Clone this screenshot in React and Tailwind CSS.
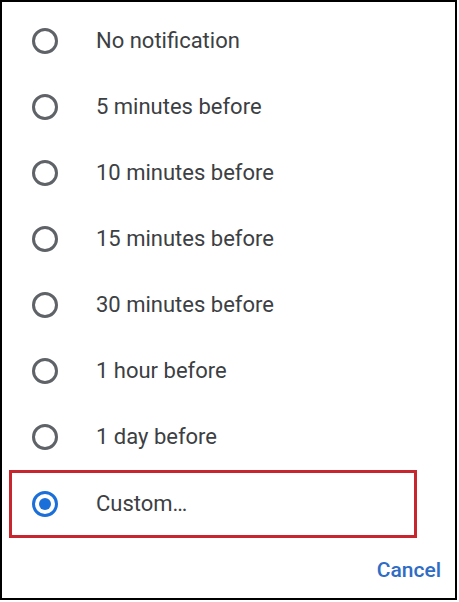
const options = [
  'No notification',
  '5 minutes before',
  '10 minutes before',
  '15 minutes before',
  '30 minutes before',
  '1 hour before',
  '1 day before',
  'Custom…',
];

function Radio({ checked }) {
  if (checked) {
    return (
      <div className="w-[26px] h-[26px] rounded-full border-[3px] border-[#1a6fd8] flex items-center justify-center shrink-0">
        <div className="w-[12px] h-[12px] rounded-full bg-[#1a6fd8]" />
      </div>
    );
  }
  return <div className="w-[26px] h-[26px] rounded-full border-[3px] border-[#5f6368] shrink-0" />;
}

export default function App() {
  const selected = options.length - 1;
  return (
    <div className="w-[459px] h-[602px] bg-white">
      <div
        className="w-[457px] h-[600px] border-2 border-black flex flex-col pt-[6px] pl-[7px]"
        style={{ fontFamily: 'Roboto, "Noto Sans", sans-serif' }}
      >
        {options.map((label, i) => (
          <div
            key={label}
            className={
              i === selected
                ? 'w-[408px] h-[68px] flex items-center border-[3px] border-[#c8262f]'
                : 'w-[408px] h-[66px] flex items-center border-[3px] border-transparent'
            }
          >
            <div className="ml-[20px]">
              <Radio checked={i === selected} />
            </div>
            <span className="ml-[38px] text-[22px] leading-[26px] text-[#3c4043]">{label}</span>
          </div>
        ))}
        <div className="flex justify-end pr-[14px] mt-[19px]">
          <span className="text-[21px] leading-[26px] font-medium text-[#2f6cc4]">Cancel</span>
        </div>
      </div>
    </div>
  );
}
